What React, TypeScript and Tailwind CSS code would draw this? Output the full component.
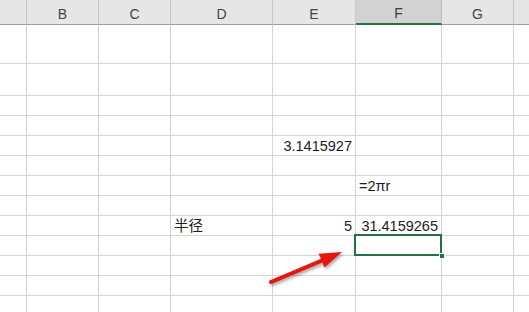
import React from "react";

const colW = [27, 72, 72, 102, 83, 86, 72, 16];
const headers = ["", "B", "C", "D", "E", "F", "G", ""];
const rowH = [39, 32, 20, 20, 20, 20, 20, 20, 20, 20, 20, 20, 20];

type CellData = { text: string; align: "left" | "right" };
const data: Record<string, CellData> = {
  "4-4": { text: "3.1415927", align: "right" },
  "6-5": { text: "=2πr", align: "left" },
  "8-3": { text: "半径", align: "left" },
  "8-4": { text: "5", align: "right" },
  "8-5": { text: "31.4159265", align: "right" },
};

export default function App() {
  return (
    <div className="relative w-[529px] h-[312px] overflow-hidden bg-white font-['Liberation_Sans','Noto_Sans_CJK_SC',sans-serif]">
      <div
        className="grid"
        style={{
          gridTemplateColumns: colW.map((w) => `${w}px`).join(" "),
          gridTemplateRows: `25px ${rowH.map((h) => `${h}px`).join(" ")}`,
        }}
      >
        {headers.map((h, i) => (
          <div
            key={`h${i}`}
            className={
              i === 5
                ? "flex items-end justify-center pb-[2px] bg-[#d2d2d2] border-r border-r-[#c0c0c0] border-b-2 border-b-[#217346] text-[14px] text-[#3a3a3a] leading-none"
                : "flex items-end justify-center pb-[2px] bg-[#e6e6e6] border-r border-r-[#c8c8c8] border-b border-b-[#9e9e9e] text-[14px] text-[#444444] leading-none"
            }
          >
            <span className="mb-[1px]">{h}</span>
          </div>
        ))}
        {rowH.map((_, r) =>
          colW.map((_, c) => {
            const d = data[`${r}-${c}`];
            const sel = r === 9 && c === 5;
            return (
              <div
                key={`${r}-${c}`}
                className={
                  sel
                    ? "relative z-10 flex items-center border-r border-b border-[#d4d4d4] text-[14.5px] text-[#1c1c1c] leading-none whitespace-nowrap"
                    : "relative flex items-center border-r border-b border-[#d4d4d4] text-[14.5px] text-[#1c1c1c] leading-none whitespace-nowrap"
                }
              >
                {d && (
                  <span
                    className={
                      d.align === "right"
                        ? "w-full text-right pr-[3px] pt-[1px]"
                        : "w-full text-left pl-[3px] pt-[1px]"
                    }
                  >
                    {d.text}
                  </span>
                )}
                {sel && (
                  <>
                    <div className="absolute left-[-2px] top-[-2px] right-[-1px] bottom-[-1px] border-2 border-[#217346]" />
                    <div className="absolute right-[-4px] bottom-[-4px] w-[6px] h-[6px] bg-[#217346] border border-white" />
                  </>
                )}
              </div>
            );
          })
        )}
      </div>
      <svg className="absolute left-0 top-0 pointer-events-none z-20" width="529" height="312" viewBox="0 0 529 312">
        <defs>
          <filter id="sh" x="-20%" y="-20%" width="140%" height="160%">
            <feDropShadow dx="1.5" dy="2" stdDeviation="1.5" floodColor="#000" floodOpacity="0.35" />
          </filter>
        </defs>
        <g filter="url(#sh)">
          <polygon
            points="271.6,283.9 322.4,262.4 324.4,267.6 342,252 318.6,253.8 321,258.8 270.2,280.2"
            fill="#e5140f"
          />
          <circle cx="270.9" cy="282" r="1.9" fill="#e5140f" />
        </g>
      </svg>
    </div>
  );
}
